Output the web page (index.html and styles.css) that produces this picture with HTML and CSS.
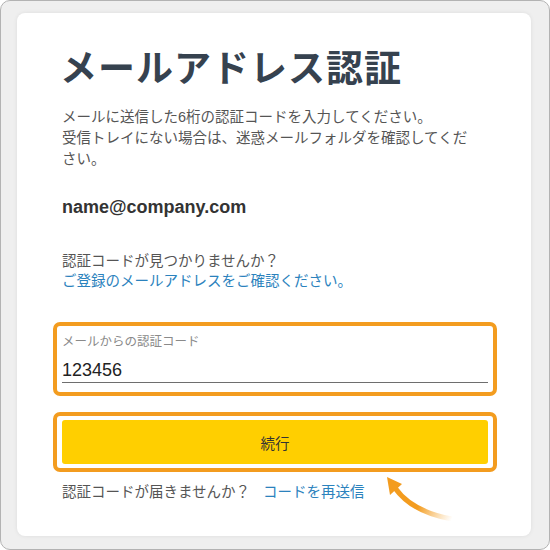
FILE: index.html
```html
<!DOCTYPE html>
<html lang="ja">
<head>
<meta charset="utf-8">
<title>メールアドレス認証</title>
<link rel="stylesheet" href="styles.css">
</head>
<body>
<div class="frame">
  <div class="card">
    <h1 class="title">メールアドレス認証</h1>
    <p class="lead">メールに送信した6桁の認証コードを入力してください。<br>受信トレイにない場合は、迷惑メールフォルダを確認してください。</p>
    <div class="email">name@company.com</div>
    <div class="hint">
      <div>認証コードが見つかりませんか？</div>
      <a class="link" href="#">ご登録のメールアドレスをご確認ください。</a>
    </div>
    <div class="highlight field-wrap">
      <div class="field">
        <div class="field-label">メールからの認証コード</div>
        <div class="field-value">123456</div>
      </div>
    </div>
    <div class="highlight btn-wrap">
      <button class="btn" type="button">続行</button>
    </div>
    <div class="resend">認証コードが届きませんか？<a class="link resend-link" href="#">コードを再送信</a></div>
  </div>
  <svg class="arrow" width="80" height="60" viewBox="380 470 80 60" xmlns="http://www.w3.org/2000/svg">
    <defs>
      <linearGradient id="ag" gradientUnits="userSpaceOnUse" x1="395" y1="488" x2="452" y2="519">
        <stop offset="0" stop-color="#f39c1f" stop-opacity="1"/>
        <stop offset="0.45" stop-color="#f39c1f" stop-opacity="1"/>
        <stop offset="1" stop-color="#f6b04a" stop-opacity="0"/>
      </linearGradient>
    </defs>
    <path d="M452 519 Q412 512 395 488" fill="none" stroke="url(#ag)" stroke-width="5"/>
    <polygon points="387,477 402,484 390,495" fill="#f39c1f"/>
  </svg>
</div>
</body>
</html>
```

FILE: styles.css
```css
* { box-sizing: border-box; }
html, body { margin: 0; padding: 0; background: #ffffff; }
body {
  font-family: "Liberation Sans", "Noto Sans CJK JP", sans-serif;
  color: #555555;
}
.frame {
  position: relative;
  width: 550px;
  height: 550px;
  border: 1px solid #b3b3b3;
  border-radius: 10px;
  background: #efefef;
  padding: 12px 18px 13px 16px;
}
.card {
  height: 100%;
  background: #ffffff;
  border-radius: 8px;
  box-shadow: 0 0 4px rgba(0, 0, 0, 0.08);
  padding: 30px 43px 0 45px;
  display: flex;
  flex-direction: column;
}
.title {
  margin: 0 0 0 -2px;
  font-family: "Noto Sans CJK JP", sans-serif;
  font-weight: 700;
  font-size: 37px;
  line-height: 47px;
  color: #36424f;
  letter-spacing: 1px;
}
.lead {
  margin: 17px 0 0;
  max-width: 415px;
  font-size: 14.5px;
  line-height: 21px;
  color: #555555;
}
.email {
  margin-top: 26px;
  font-weight: 700;
  font-size: 18px;
  line-height: 22px;
  color: #333333;
}
.hint {
  margin-top: 33px;
  font-size: 14.5px;
  line-height: 20px;
  color: #555555;
}
.link {
  color: #2b82bd;
  text-decoration: none;
}
.highlight {
  border: 4px solid #f39c1f;
  border-radius: 7px;
  background: #ffffff;
  margin-left: -9px;
  margin-right: -9px;
  padding: 0 5px;
}
.field-wrap {
  margin-top: 31px;
  padding-top: 8px;
  padding-bottom: 9px;
}
.field {
  border-bottom: 1px solid #6e6e6e;
  padding-bottom: 2px;
}
.field-label {
  font-size: 12.5px;
  line-height: 16px;
  color: #8a8a8a;
}
.field-value {
  margin-top: 10px;
  font-size: 18px;
  line-height: 20px;
  color: #222222;
}
.btn-wrap {
  margin-top: 16px;
  padding-top: 4px;
  padding-bottom: 4px;
}
.btn {
  display: block;
  width: 100%;
  height: 44px;
  border: none;
  border-radius: 3px;
  background: #ffcf00;
  font-family: "Liberation Sans", "Noto Sans CJK JP", sans-serif;
  font-size: 14.5px;
  color: #333333;
  padding: 0;
}
.resend {
  margin-top: 10px;
  font-size: 14.5px;
  line-height: 21px;
  color: #555555;
}
.resend-link {
  margin-left: 13px;
}
.arrow {
  position: absolute;
  left: 379px;
  top: 469px;
}
```
